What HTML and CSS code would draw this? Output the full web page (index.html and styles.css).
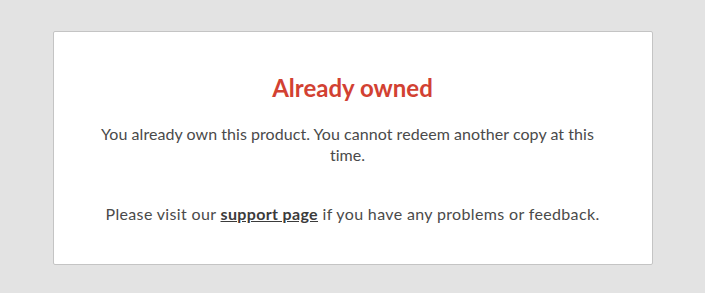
FILE: index.html
```html
<!DOCTYPE html>
<html>
<head>
<meta charset="utf-8">
<link rel="stylesheet" href="styles.css">
</head>
<body>
<div class="page">
  <div class="card">
    <h1 class="title">Already owned</h1>
    <p class="msg">You already own this product. You cannot redeem another copy at this time.</p>
    <p class="help">Please visit our <a class="link" href="#">support page</a> if you have any problems or feedback.</p>
  </div>
</div>
</body>
</html>
```
FILE: styles.css
```css
html, body {
  margin: 0;
  padding: 0;
  background: #e3e3e3;
}
.page {
  display: flex;
  justify-content: center;
  padding-top: 31px;
}
.card {
  box-sizing: border-box;
  width: 600px;
  height: 234px;
  background: #fff;
  border: 1px solid #c4c4c4;
  border-radius: 2px;
  padding: 42px 40px 0 30px;
  text-align: center;
  font-family: Lato, "Noto Sans", sans-serif;
  color: #4a4a4a;
}
.title {
  margin: 0 0 0 10px;
  font-size: 24px;
  line-height: 28px;
  font-weight: 700;
  color: #d24132;
}
.msg {
  margin: 21px 0 0;
  font-size: 16px;
  line-height: 21px;
  letter-spacing: 0.05px;
}
.help {
  margin: 38px 0 0 10px;
  font-size: 16px;
  line-height: 21px;
  letter-spacing: 0.35px;
}
.link {
  color: #3b3b3b;
  font-weight: 700;
  text-decoration: underline;
}
```
